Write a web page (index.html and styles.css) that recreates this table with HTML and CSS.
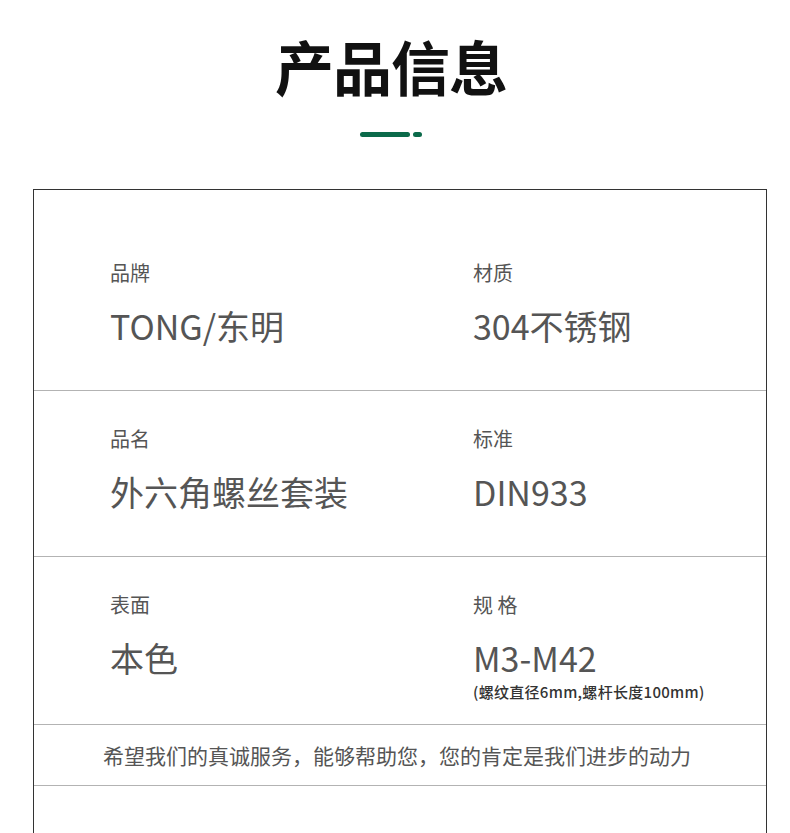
FILE: index.html
```html
<!DOCTYPE html>
<html lang="zh-CN">
<head>
  <meta charset="UTF-8"/>
  <meta name="viewport" content="width=device-width, initial-scale=1.0"/>
  <title>产品信息</title>
  <link rel="stylesheet" href="styles.css">
</head>
<body>

  <header class="head">
    <h1 class="title">产品信息</h1>
    <div class="mark"><span class="mark-bar"></span><span class="mark-dot"></span></div>
  </header>

  <section class="info">
    <div class="row">
      <div class="cell">
        <p class="label">品牌</p>
        <p class="value">TONG/东明</p>
      </div>
      <div class="cell">
        <p class="label">材质</p>
        <p class="value">304不锈钢</p>
      </div>
    </div>

    <div class="row">
      <div class="cell">
        <p class="label">品名</p>
        <p class="value">外六角螺丝套装</p>
      </div>
      <div class="cell">
        <p class="label">标准</p>
        <p class="value">DIN933</p>
      </div>
    </div>

    <div class="row">
      <div class="cell">
        <p class="label">表面</p>
        <p class="value">本色</p>
      </div>
      <div class="cell">
        <p class="label">规 格</p>
        <p class="value">M3-M42</p>
        <p class="note">(螺纹直径6mm,螺杆长度100mm)</p>
      </div>
    </div>

    <div class="slogan">希望我们的真诚服务，能够帮助您，您的肯定是我们进步的动力</div>
    <div class="tail"></div>
  </section>

</body>
</html>
```

FILE: styles.css
```css
/* базовые */
* { margin:0; padding:0; box-sizing:border-box; }
html, body {
  width:100%; height:100%; overflow:hidden;
  background:#fff; color:#555;
  font-family:'Noto Sans CJK SC','Noto Sans',sans-serif;
}

/* заголовок */
.head {
  display:flex; flex-direction:column; align-items:center;
  padding:31px 8px 0 0;
  height:189px;
}
.title {
  font-size:59px; line-height:70px;
  font-weight:700; color:#111;
  letter-spacing:-1px;
}
.mark {
  display:flex; gap:3px;
  margin-top:31px;
}
.mark-bar, .mark-dot {
  display:block; height:5px; border-radius:3px;
  background:#0b6a4a;
}
.mark-bar { width:50px; }
.mark-dot { width:9px; }

/* таблица */
.info {
  margin:0 23px 0 33px;
  border:1px solid #333; border-bottom:none;
  padding-top:35px;
}
.row {
  display:grid;
  grid-template-columns:363px 1fr;
  height:166px;
  padding:34px 0 0 76px;
  border-bottom:1px solid #b3b3b3;
}
.row:nth-child(3) { height:168px; }
.label {
  font-size:20px; line-height:28px; color:#555;
}
.value {
  font-size:34px; line-height:44px; color:#555;
  margin-top:17px;
}
.note {
  font-size:15px; line-height:20px; color:#333;
  font-weight:500; letter-spacing:0.3px;
  margin-top:2px;
}
.slogan {
  height:61px;
  display:flex; align-items:center; justify-content:center;
  font-size:21px; color:#555;
  border-bottom:1px solid #b3b3b3;
  padding-right:6px;
}
.tail { height:60px; }
```
